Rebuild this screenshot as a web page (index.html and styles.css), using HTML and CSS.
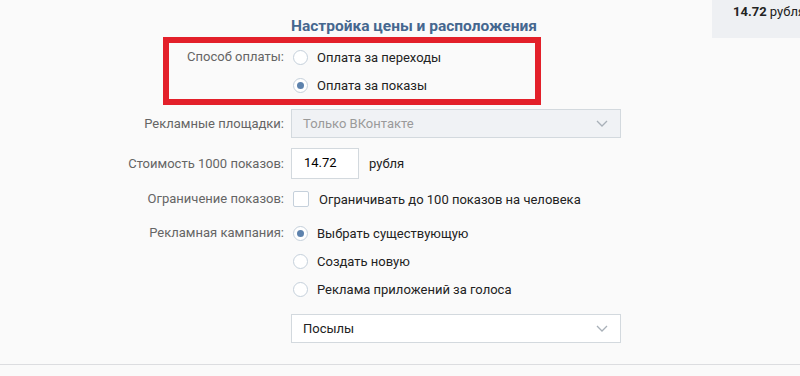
FILE: index.html
```html
<!DOCTYPE html>
<html>
  <head>
    <meta charset="UTF-8" />
    <title>Настройка цены и расположения</title>
    <link rel="stylesheet" href="styles.css">
  </head>
  <body>
    <div class="layout">
      <div class="main">
        <div class="row title-row">
          <div class="row-label"></div>
          <h2 class="section-title">Настройка цены и расположения</h2>
        </div>

        <div class="row row-top">
          <div class="row-label">Способ оплаты:</div>
          <div class="options">
            <label class="option">
              <span class="radio"></span>
              Оплата за переходы
            </label>
            <label class="option">
              <span class="radio checked"></span>
              Оплата за показы
            </label>
          </div>
        </div>

        <div class="row select-row">
          <div class="row-label">Рекламные площадки:</div>
          <div class="select disabled">
            <span>Только ВКонтакте</span>
            <svg class="chevron" viewBox="0 0 12 7">
              <polyline points="1,1 6,6 11,1" />
            </svg>
          </div>
        </div>

        <div class="row price-row">
          <div class="row-label">Стоимость 1000 показов:</div>
          <div class="price-input">14.72</div>
          <span class="unit">рубля</span>
        </div>

        <div class="row limit-row">
          <div class="row-label">Ограничение показов:</div>
          <label class="option">
            <span class="checkbox"></span>
            Ограничивать до 100 показов на человека
          </label>
        </div>

        <div class="row row-top campaign-row">
          <div class="row-label">Рекламная кампания:</div>
          <div class="options">
            <label class="option">
              <span class="radio checked"></span>
              Выбрать существующую
            </label>
            <label class="option">
              <span class="radio"></span>
              Создать новую
            </label>
            <label class="option">
              <span class="radio"></span>
              Реклама приложений за голоса
            </label>
          </div>
        </div>

        <div class="row campaign-select-row">
          <div class="row-label"></div>
          <div class="select">
            <span>Посылы</span>
            <svg class="chevron" viewBox="0 0 12 7">
              <polyline points="1,1 6,6 11,1" />
            </svg>
          </div>
        </div>

        <!-- annotation drawn over the payment options -->
        <div class="highlight"></div>
      </div>

      <div class="aside">
        <div class="aside-price"><b>14.72</b> рубля</div>
      </div>
    </div>

    <div class="divider"></div>
  </body>
</html>
```

FILE: styles.css
```css
body {
  font-family: Roboto, "Open Sans", Arial, sans-serif;
  font-size: 13px;
  margin: 0;
  padding: 0;
  background-color: #fafafa;
  color: #222;
  overflow: hidden;
}
.layout {
  display: flex;
  align-items: flex-start;
}
.main {
  position: relative;
  width: 712px;
  flex-shrink: 0;
  padding-top: 16px;
}
.aside {
  flex: 1;
  height: 38px;
  background-color: #eef0f3;
  padding-left: 21px;
  overflow: hidden;
  white-space: nowrap;
  line-height: 24px;
  color: #222;
}
.aside b {
  font-weight: bold;
}
.row {
  display: flex;
  align-items: center;
}
.row-top {
  align-items: flex-start;
}
.row-label {
  width: 284px;
  flex-shrink: 0;
  margin-right: 7px;
  text-align: right;
  color: #656565;
  line-height: 28px;
}
.section-title {
  margin: 0;
  font-size: 15.5px;
  line-height: 20px;
  font-weight: bold;
  color: #45678f;
}
.title-row {
  margin-bottom: 7px;
}
.options {
  display: flex;
  flex-direction: column;
}
.option {
  display: flex;
  align-items: center;
  height: 28px;
  color: #222;
}
.radio {
  width: 13px;
  height: 13px;
  margin: 0 9px 0 2px;
  border: 1px solid #c5d0db;
  border-radius: 50%;
  background-color: #fff;
  display: flex;
  align-items: center;
  justify-content: center;
  flex-shrink: 0;
}
.radio.checked::after {
  content: "";
  width: 7px;
  height: 7px;
  border-radius: 50%;
  background-color: #5d82ad;
}
.checkbox {
  width: 14px;
  height: 14px;
  margin: 0 10px 0 2px;
  border: 1px solid #c5d0db;
  border-radius: 2px;
  background-color: #fff;
  flex-shrink: 0;
}
.select-row {
  margin-top: 10px;
}
.select {
  width: 330px;
  height: 29px;
  box-sizing: border-box;
  border: 1px solid #d3d9de;
  background-color: #fff;
  display: flex;
  align-items: center;
  justify-content: space-between;
  padding: 0 12px 0 11px;
  color: #222;
}
.select.disabled {
  background-color: #f0f2f5;
  color: #9a9a9a;
}
.chevron {
  width: 12px;
  height: 7px;
  fill: none;
  stroke: #a8b0b8;
  stroke-width: 1.3;
}
.price-row {
  margin-top: 10px;
}
.price-input {
  width: 68px;
  height: 31px;
  box-sizing: border-box;
  border: 1px solid #d3d9de;
  background-color: #fff;
  padding: 0 12px;
  line-height: 28px;
  color: #000;
}
.unit {
  margin-left: 10px;
  color: #222;
}
.limit-row {
  margin-top: 6px;
}
.campaign-row {
  margin-top: 6px;
}
.campaign-select-row {
  margin-top: 11px;
}
.highlight {
  position: absolute;
  left: 163px;
  top: 37px;
  width: 378px;
  height: 68px;
  box-sizing: border-box;
  border: 6px solid #e3202a;
}
.divider {
  margin-top: 21px;
  height: 1px;
  background-color: #dcdde0;
}
```
